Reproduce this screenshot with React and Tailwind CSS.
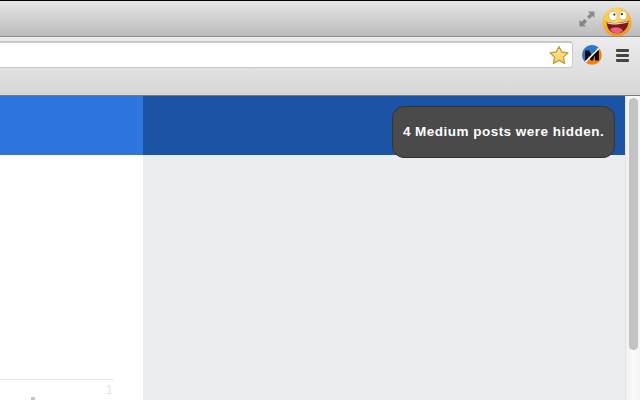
import React from "react";

const FONT = "font-['Liberation_Sans',Arial,sans-serif]";

const ExpandIcon = () => (
  <svg width="16" height="16" viewBox="0 0 16 16" className="block">
    <path d="M9 0.5H15.5V7L13.5 5L10.4 8L8 5.6L11 2.5Z" fill="#8c8c8c" />
    <path d="M0.5 9V15.5H7L5 13.5L8 10.4L5.6 8L2.5 11Z" fill="#858585" />
  </svg>
);

const Face = () => (
  <svg width="30" height="30" viewBox="0 0 30 30" className="block">
    <defs>
      <radialGradient id="faceFill" cx="45%" cy="28%" r="78%">
        <stop offset="0%" stopColor="#fde58a" />
        <stop offset="55%" stopColor="#f9c13f" />
        <stop offset="100%" stopColor="#e58a18" />
      </radialGradient>
    </defs>
    <circle cx="15" cy="15" r="14.5" fill="url(#faceFill)" />
    <ellipse cx="11" cy="8.8" rx="4.2" ry="4.6" fill="#fff" stroke="#a87a20" strokeWidth="0.4" />
    <ellipse cx="21" cy="8.4" rx="3.8" ry="4.4" fill="#fff" stroke="#a87a20" strokeWidth="0.4" />
    <circle cx="12.4" cy="7.6" r="1.1" fill="#3a2a15" />
    <circle cx="19.8" cy="7.2" r="1.1" fill="#3a2a15" />
    <path d="M4.5 14.5C10 16.8 20 16.4 26.5 13.5C27 20 22 26.5 15 26.5C8.5 26.5 4.5 21 4.5 14.5Z" fill="#7a1a1c" />
    <path d="M5.2 15C10.5 17 19.5 16.7 25.8 14.1L25.4 15.6C19 17.7 11 18 5.5 16.4Z" fill="#f4e4d0" />
    <path d="M8 22.5C10.5 19.5 18 19.3 21 23.4C19 25.7 17 26.4 15 26.4C12.4 26.4 9.8 25 8 22.5Z" fill="#ee5f7a" />
  </svg>
);

const Star = () => (
  <svg width="20" height="20" viewBox="0 0 20 20" className="block">
    <defs>
      <linearGradient id="starFill" x1="0" y1="0" x2="0" y2="1">
        <stop offset="0%" stopColor="#fdeaa0" />
        <stop offset="100%" stopColor="#f9cf5c" />
      </linearGradient>
    </defs>
    <path
      d="M10 1.6L12.7 7L19 7.8L14.4 12.1L15.6 18.4L10 15.4L4.4 18.4L5.6 12.1L1 7.8L7.3 7Z"
      fill="url(#starFill)"
      stroke="#c99a3e"
      strokeWidth="1.3"
      strokeLinejoin="round"
    />
  </svg>
);

const ExtensionBadge = () => (
  <svg width="20" height="20" viewBox="0 0 20 20" className="block">
    <circle cx="10" cy="10" r="9.8" fill="#f57f17" />
    <path d="M17 3A9.8 9.8 0 0 0 3 17Z" fill="#2a7ac9" />
    <path d="M3 5.5H7L10 10.5L12.5 5.5H17V15.5H13V10.5L10.8 15.5H8.8L6.6 10.5V15.5H3Z" fill="#0d0d14" />
    <path d="M3.5 17L16.8 3.2" stroke="#fff" strokeWidth="1.6" />
  </svg>
);

const Hamburger = () => (
  <div className="flex flex-col gap-[2px] w-[13px]">
    <div className="h-[3px] rounded-[1px] bg-[#444]" />
    <div className="h-[3px] rounded-[1px] bg-[#444]" />
    <div className="h-[3px] rounded-[1px] bg-[#444]" />
  </div>
);

const Scrollbar = () => (
  <div className="w-[15px] shrink-0 bg-gradient-to-r from-[#f0f0f0] via-[#fafafa] to-[#f4f4f4] border-l border-[#e4e4e4] pl-[3px] pt-[2px]">
    <div className="w-[9px] h-[252px] rounded-[5px] bg-[#c3c3c3]" />
  </div>
);

export default function App() {
  return (
    <div className={`relative w-[640px] h-[400px] overflow-hidden flex flex-col bg-white ${FONT}`}>
      {/* title bar */}
      <div className="h-[37px] shrink-0 flex items-start justify-end border-t border-black border-b border-b-[#8e8e8e] bg-gradient-to-b from-[#e6e6e6] to-[#bcbcbc]">
        <div className="mt-[10px] mr-[7px]">
          <ExpandIcon />
        </div>
        <div className="mt-[6px] mr-[8px]">
          <Face />
        </div>
      </div>

      {/* toolbar, url field and bookmarks strip share one gradient */}
      <div className="h-[59px] shrink-0 flex items-start pt-[4px] bg-gradient-to-b from-[#ececec] to-[#d6d6d6] border-b border-[#7a7a7a]">
        <div className="w-[573px] h-[27px] shrink-0 flex items-center justify-end pr-[3px] bg-white border border-l-0 border-t-2 border-[#c8c8c8] rounded-r-[3px]">
          <Star />
        </div>
        <div className="ml-[9px] mt-[4px]">
          <ExtensionBadge />
        </div>
        <div className="ml-[14px] mt-[8px]">
          <Hamburger />
        </div>
      </div>

      {/* page */}
      <div className="flex-1 flex min-h-0">
        <div className="flex-1 flex flex-col min-w-0">
          <div className="h-[59px] shrink-0 flex">
            <div className="w-[143px] bg-[#2e76dd]" />
            <div className="flex-1 bg-[#1b54a5]" />
          </div>
          <div className="flex-1 flex min-h-0">
            <div className="w-[143px] flex flex-col bg-white pt-[224px]">
              <div className="w-[113px] h-[1px] bg-[#e3e3e3]" />
              <div className="w-[113px] flex justify-end pt-[3px] text-[13px] leading-[13px] text-[#e4e4e4]">1</div>
              <div className="ml-[31px] w-[4px] h-[3px] mt-[1px] bg-[#c4c4ce]" />
            </div>
            <div className="flex-1 bg-[#ecedf1]" />
          </div>
        </div>
        <Scrollbar />
      </div>

      {/* toast */}
      <div className="absolute left-[392px] top-[106px] w-[223px] h-[52px] flex items-center justify-center pt-[1px] rounded-[12px] bg-[#4a4a4a] border border-[#333] text-white text-[13.5px] font-bold tracking-[0.48px]">
        4 Medium posts were hidden.
      </div>
    </div>
  );
}
